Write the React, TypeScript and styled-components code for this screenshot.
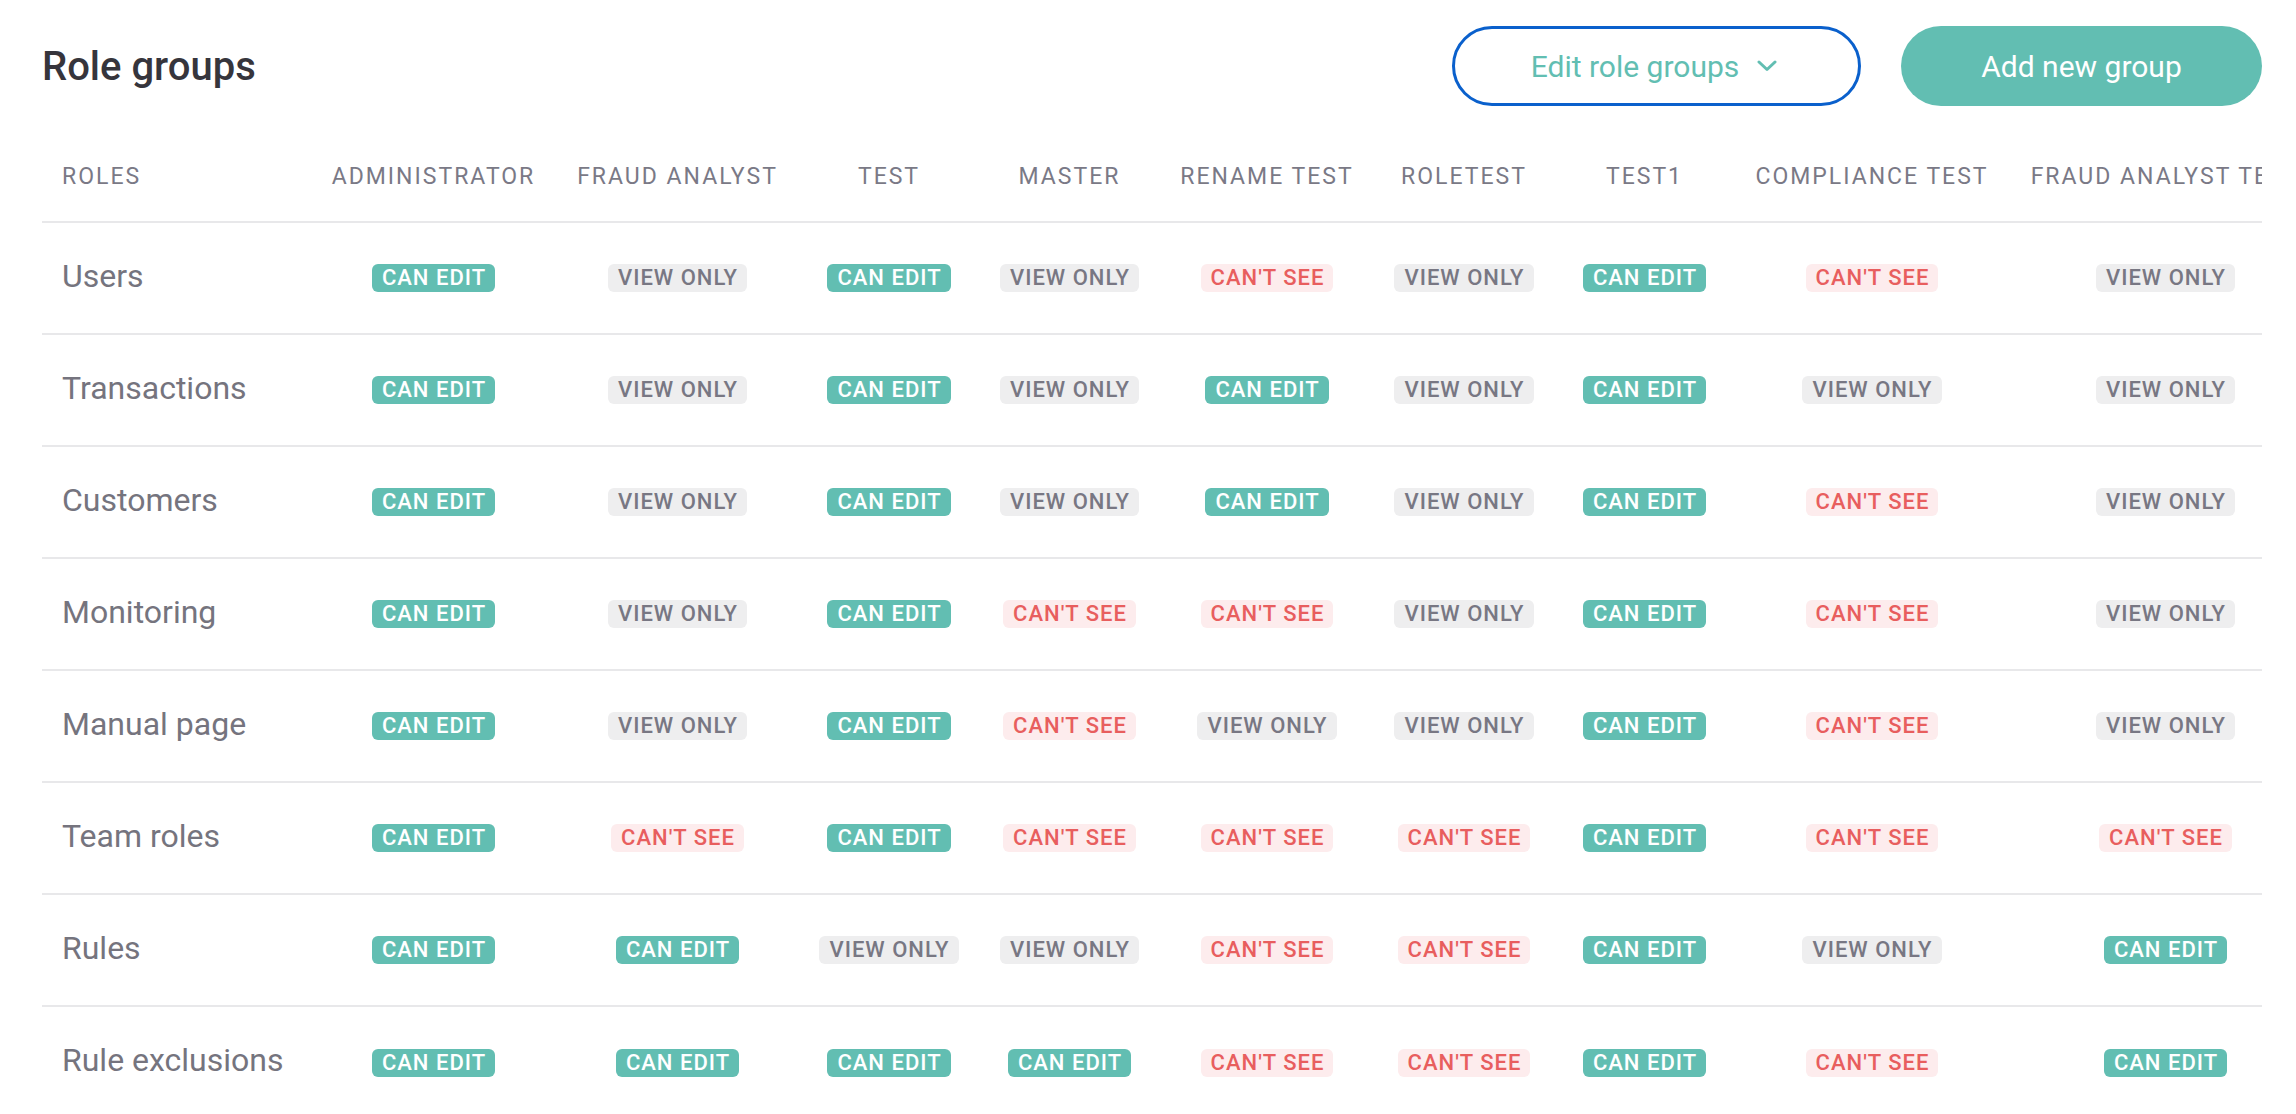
import React from "react";
import styled, { createGlobalStyle, css } from "styled-components";

type Access = "edit" | "view" | "none";

const GlobalStyle = createGlobalStyle`
  html, body {
    margin: 0;
    padding: 0;
    background: #ffffff;
  }
  body {
    font-family: Roboto, "Liberation Sans", Arial, sans-serif;
    -webkit-font-smoothing: antialiased;
  }
  * {
    box-sizing: border-box;
  }
`;

const Page = styled.main`
  width: 100%;
  height: 1114px;
  overflow: hidden;
  padding: 26px 34px 0 42px;
`;

const Toolbar = styled.header`
  display: flex;
  align-items: center;
  justify-content: space-between;
  height: 80px;
  margin-bottom: 26px;
`;

const Title = styled.h1`
  margin: 0;
  font-size: 40px;
  font-weight: 500;
  color: #36353c;
  letter-spacing: 0;
`;

const Actions = styled.div`
  display: flex;
  align-items: center;
  gap: 40px;
`;

const PillButton = styled.button<{ $outline?: boolean }>`
  display: flex;
  align-items: center;
  justify-content: center;
  gap: 18px;
  height: 80px;
  border-radius: 40px;
  font-family: Roboto, "Liberation Sans", Arial, sans-serif;
  font-size: 30px;
  font-weight: 400;
  cursor: pointer;
  ${(p) =>
    p.$outline
      ? css`
          width: 409px;
          background: #ffffff;
          color: #62beb2;
          border: 3px solid #0a60cc;
          padding: 0 5px 0 0;
        `
      : css`
          width: 361px;
          background: #62beb2;
          color: #ffffff;
          border: none;
        `}
`;

const TableWrap = styled.div`
  width: 100%;
  overflow: hidden;
`;

const Table = styled.table`
  table-layout: fixed;
  width: 2280px;
  border-collapse: collapse;
  border-spacing: 0;
`;

const HeadCell = styled.th<{ $first?: boolean }>`
  height: 90px;
  padding: 0 ${(p) => (p.$first ? "0 0 20px" : "0")};
  text-align: ${(p) => (p.$first ? "left" : "center")};
  vertical-align: middle;
  font-size: 23px;
  font-weight: 400;
  letter-spacing: 2px;
  color: #7a7986;
  white-space: nowrap;
  border-bottom: 2px solid #e8e8ea;
`;

const Row = styled.tr<{ $last?: boolean }>`
  td {
    border-bottom: ${(p) => (p.$last ? "none" : "2px solid #e8e8ea")};
  }
`;

const LabelCell = styled.td`
  height: 112px;
  padding: 0 0 5px 20px;
  vertical-align: middle;
  font-size: 32px;
  font-weight: 400;
  color: #75747e;
  white-space: nowrap;
`;

const BadgeCell = styled.td`
  height: 112px;
  padding: 0;
  text-align: center;
  vertical-align: middle;
`;

const badgeColors: Record<Access, { bg: string; fg: string; text: string }> = {
  edit: { bg: "#62beb2", fg: "#ffffff", text: "CAN EDIT" },
  view: { bg: "#eeeeef", fg: "#787783", text: "VIEW ONLY" },
  none: { bg: "#fdeced", fg: "#e85e5e", text: "CAN'T SEE" },
};

const Badge = styled.span<{ $kind: Access }>`
  display: inline-flex;
  align-items: center;
  height: 28px;
  padding: 0 9px 0 10px;
  border-radius: 6px;
  font-size: 22px;
  font-weight: 500;
  letter-spacing: 1px;
  line-height: 1;
  white-space: nowrap;
  background: ${(p) => badgeColors[p.$kind].bg};
  color: ${(p) => badgeColors[p.$kind].fg};
`;

const columns = [
  "ADMINISTRATOR",
  "FRAUD ANALYST",
  "TEST",
  "MASTER",
  "RENAME TEST",
  "ROLETEST",
  "TEST1",
  "COMPLIANCE TEST",
  "FRAUD ANALYST TEST",
];

const colWidths = [269, 245, 243, 180, 181, 214, 180, 181, 274, 313];

const E: Access = "edit";
const V: Access = "view";
const X: Access = "none";

const rows: { name: string; access: Access[] }[] = [
  { name: "Users", access: [E, V, E, V, X, V, E, X, V] },
  { name: "Transactions", access: [E, V, E, V, E, V, E, V, V] },
  { name: "Customers", access: [E, V, E, V, E, V, E, X, V] },
  { name: "Monitoring", access: [E, V, E, X, X, V, E, X, V] },
  { name: "Manual page", access: [E, V, E, X, V, V, E, X, V] },
  { name: "Team roles", access: [E, X, E, X, X, X, E, X, X] },
  { name: "Rules", access: [E, E, V, V, X, X, E, V, E] },
  { name: "Rule exclusions", access: [E, E, E, E, X, X, E, X, E] },
];

function Chevron() {
  return (
    <svg width="20" height="12" viewBox="0 0 20 12" fill="none">
      <polyline
        points="2,2 10,9.5 18,2"
        stroke="#62beb2"
        strokeWidth="3"
        strokeLinecap="round"
        strokeLinejoin="round"
      />
    </svg>
  );
}

export default function App() {
  return (
    <>
      <GlobalStyle />
      <Page>
        <Toolbar>
          <Title>Role groups</Title>
          <Actions>
            <PillButton $outline type="button">
              Edit role groups
              <Chevron />
            </PillButton>
            <PillButton type="button">Add new group</PillButton>
          </Actions>
        </Toolbar>
        <TableWrap>
          <Table>
            <colgroup>
              {colWidths.map((w, i) => (
                <col key={i} style={{ width: w }} />
              ))}
            </colgroup>
            <thead>
              <tr>
                <HeadCell $first>ROLES</HeadCell>
                {columns.map((c) => (
                  <HeadCell key={c}>{c}</HeadCell>
                ))}
              </tr>
            </thead>
            <tbody>
              {rows.map((r, i) => (
                <Row key={r.name} $last={i === rows.length - 1}>
                  <LabelCell>{r.name}</LabelCell>
                  {r.access.map((a, j) => (
                    <BadgeCell key={j}>
                      <Badge $kind={a}>{badgeColors[a].text}</Badge>
                    </BadgeCell>
                  ))}
                </Row>
              ))}
            </tbody>
          </Table>
        </TableWrap>
      </Page>
    </>
  );
}
